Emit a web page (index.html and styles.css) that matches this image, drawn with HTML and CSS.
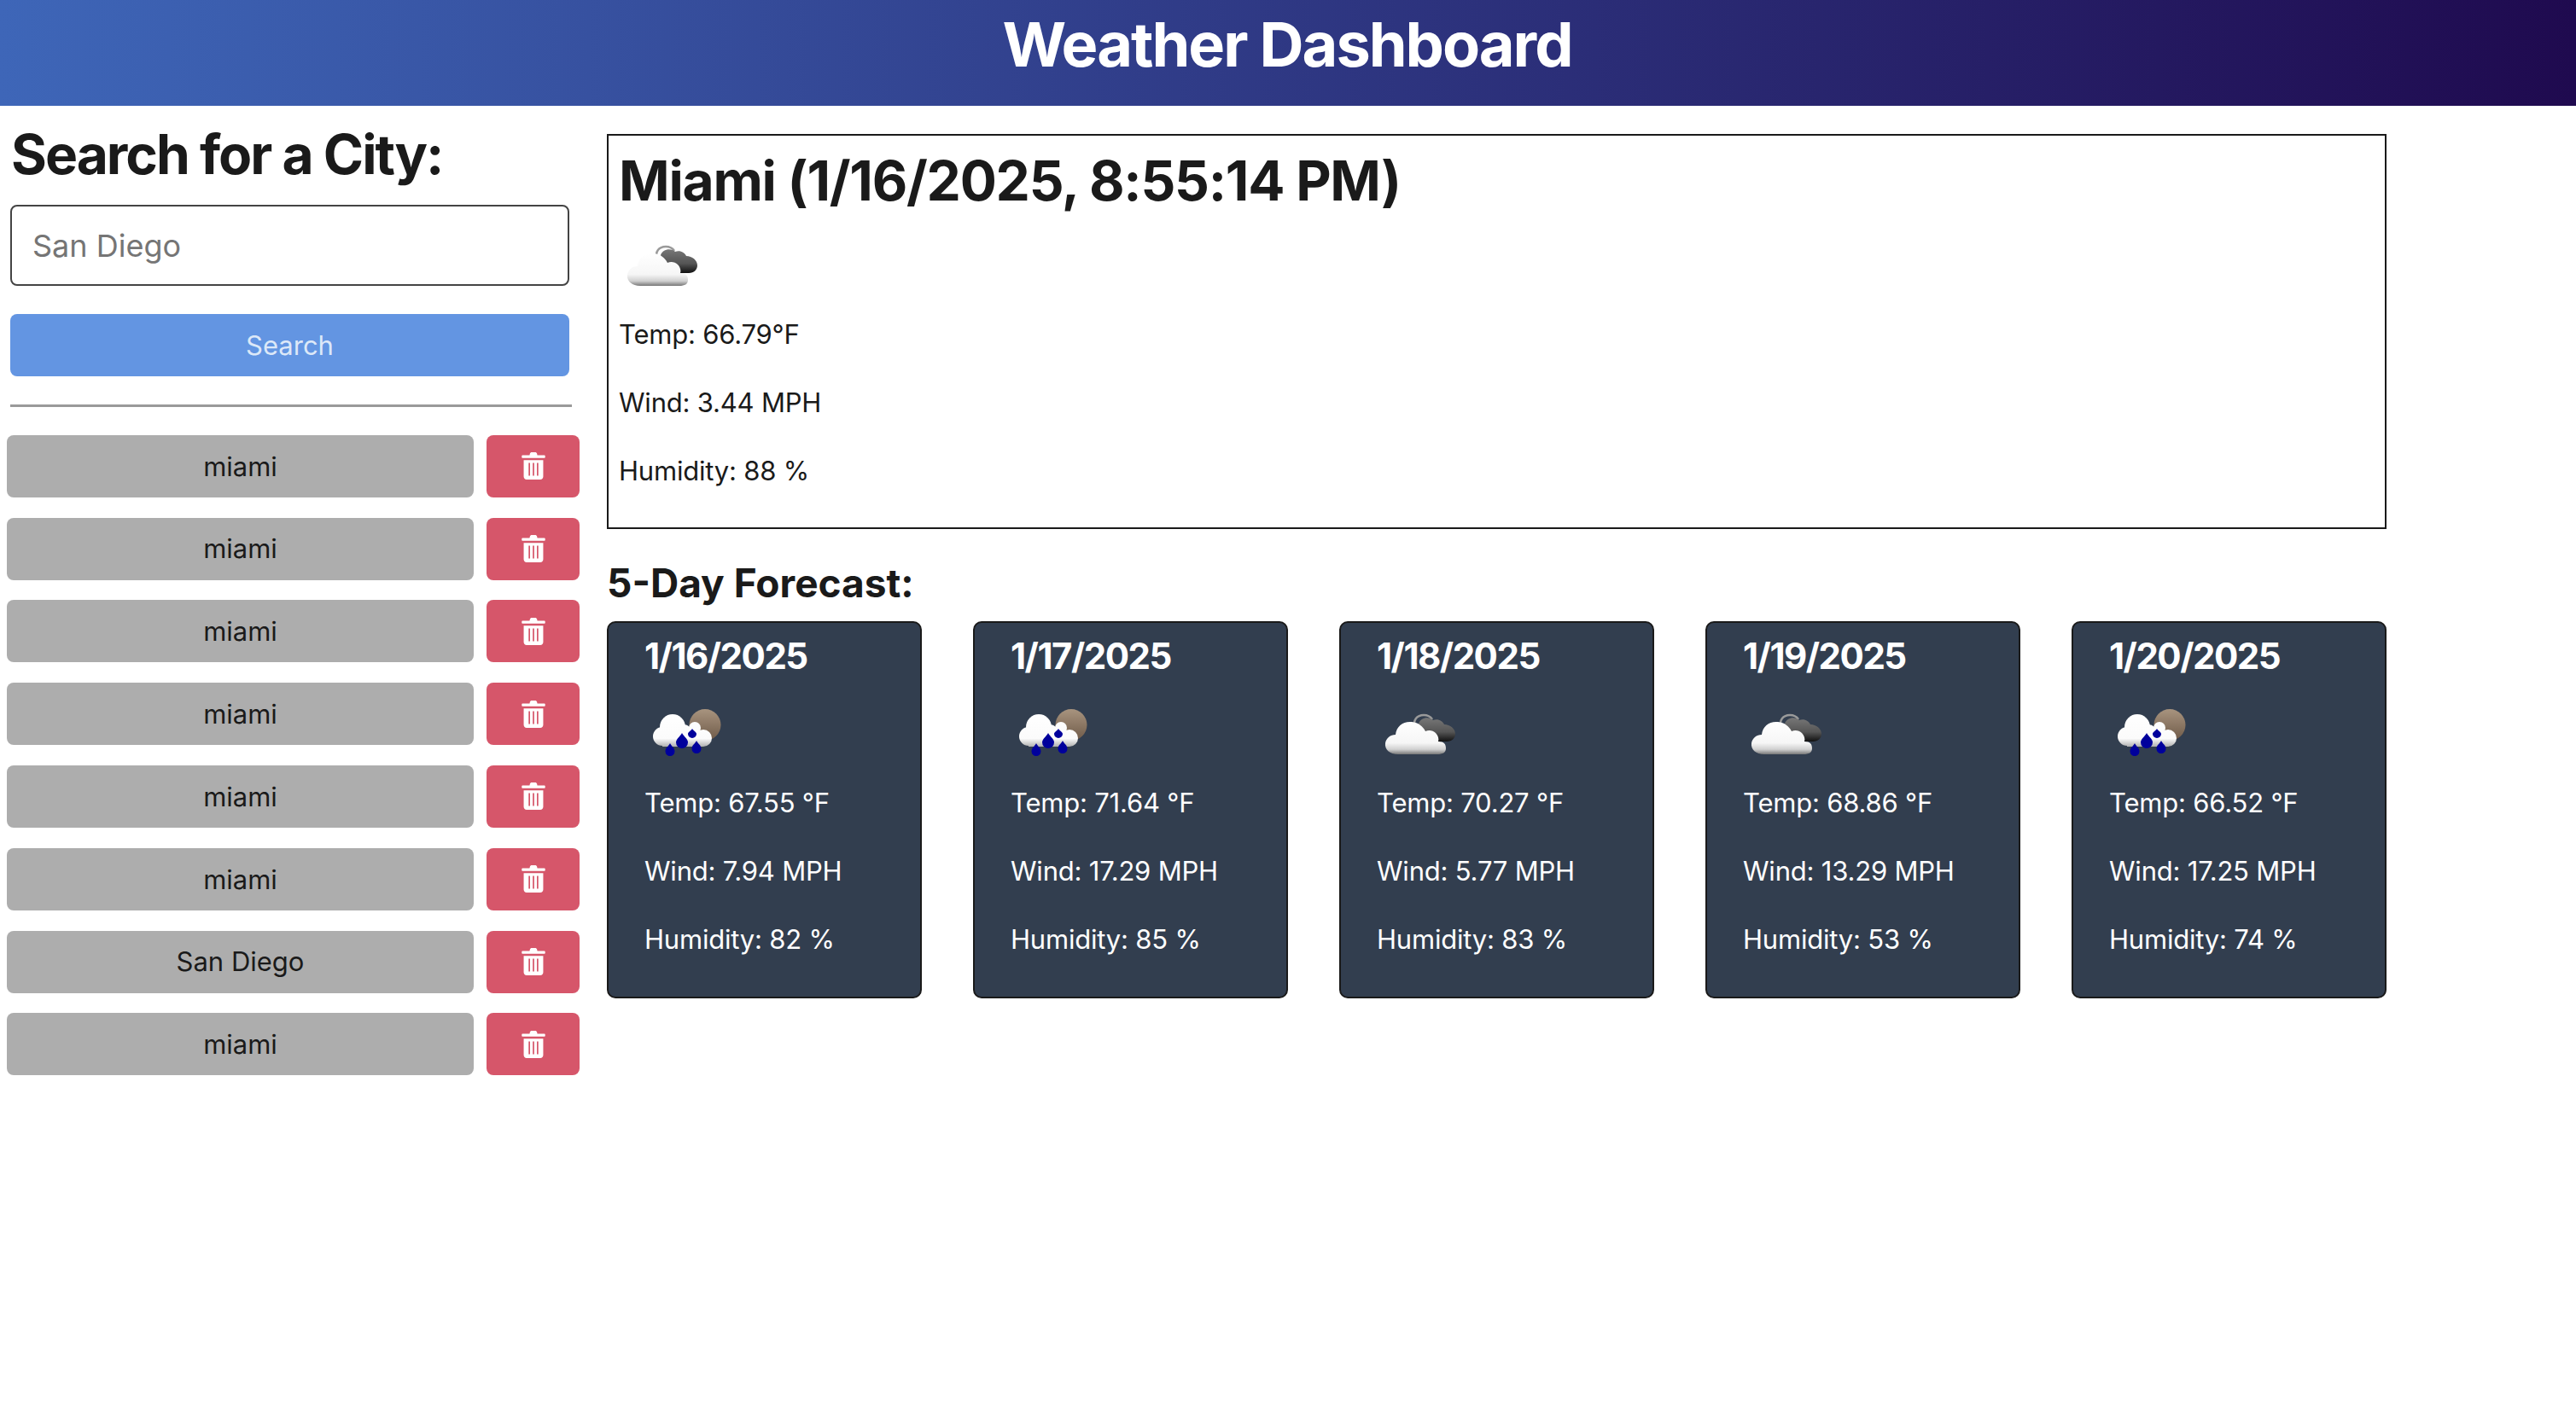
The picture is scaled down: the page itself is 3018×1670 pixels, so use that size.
FILE: index.html
```html
<!DOCTYPE html>
<html lang="en">
<head>
  <meta charset="UTF-8" />
  <title>Weather Dashboard</title>
  <link rel="stylesheet" href="styles.css">
</head>
<body>
  <svg class="defs" width="0" height="0">
    <defs>
      <linearGradient id="cloudWhite" x1="0" y1="0" x2="0" y2="1">
        <stop offset="0" stop-color="#ffffff" />
        <stop offset="0.65" stop-color="#f6f6f6" />
        <stop offset="0.85" stop-color="#d0d0d0" />
        <stop offset="1" stop-color="#777777" />
      </linearGradient>
      <linearGradient id="cloudDark" x1="0" y1="0" x2="0" y2="1">
        <stop offset="0" stop-color="#777777" />
        <stop offset="0.6" stop-color="#555555" />
        <stop offset="1" stop-color="#111111" />
      </linearGradient>
      <linearGradient id="cloudRain" gradientUnits="userSpaceOnUse" x1="0" y1="20" x2="0" y2="58">
        <stop offset="0" stop-color="#ffffff" />
        <stop offset="0.75" stop-color="#fbfbfb" />
        <stop offset="1" stop-color="#b0b0b0" />
      </linearGradient>
      <linearGradient id="moon" x1="0" y1="0" x2="0" y2="1">
        <stop offset="0" stop-color="#a8947f" />
        <stop offset="1" stop-color="#6f5a48" />
      </linearGradient>

      <!-- overcast icon -->
      <symbol id="iconClouds" viewBox="0 0 100 100">
        <g transform="translate(7 -1)">
          <path d="M38 36c-3-8 2-14 10-14 5 0 8 2 10 5" fill="none" stroke="#9a9a9a" stroke-width="2.500" />
          <path d="M42 32c2-7 12-9 17-4 6-2 11 1 13 5 7 0 13 5 13 11 0 5-4 9-10 9H60c-8 0-18-12-18-21z" fill="url(#cloudDark)" />
          <path d="M18 68C8 68 2 62 3 55c1-6 6-10 12-10 1-10 9-16 19-15 8 1 13 5 16 11 4-2 9-1 12 2 3 3 4 7 3 10 7 0 9 3 9 8s-4 7-10 7z" fill="url(#cloudWhite)" />
        </g>
      </symbol>

      <!-- rain icon -->
      <symbol id="iconRain" viewBox="0 0 100 100">
        <circle cx="71" cy="32.500" r="18.500" fill="url(#moon)" />
        <g fill="url(#cloudRain)">
          <circle cx="33" cy="35" r="15" />
          <circle cx="21" cy="46" r="11" />
          <circle cx="46" cy="42" r="10" />
          <circle cx="59" cy="36" r="7" />
          <circle cx="69" cy="48" r="10" />
          <rect x="21" y="40" width="48" height="18" />
        </g>
        <g fill="#00009c">
          <path d="M56 37c1 2 5 4 5 6a5 5 0 0 1-10 0c0-2 4-4 5-6z" />
          <path d="M44 42c2 4 7 7 7 11a7 7 0 0 1-14 0c0-4 5-7 7-11z" />
          <path d="M30 54c1 3 5.500 5 5.500 9.500a5.500 5.500 0 0 1-11 0c0-4.500 4.500-6.500 5.500-9.500z" />
          <path d="M61 51c1 3 5.500 5 5.500 9.500a5.500 5.500 0 0 1-11 0c0-4.500 4.500-6.500 5.500-9.500z" />
        </g>
      </symbol>

      <symbol id="iconTrash" viewBox="0 0 24 28">
        <path d="M8.500 1.200C8.800.5 9.400 0 10.200 0h3.600c.8 0 1.400.5 1.700 1.200L16 3h7c.6 0 1 .4 1 1v1c0 .6-.4 1-1 1H1C.4 6 0 5.600 0 5V4c0-.6.4-1 1-1h7z" fill="#fff" />
        <path fill-rule="evenodd" d="M2 8h20v17c0 1.700-1.300 3-3 3H5c-1.700 0-3-1.300-3-3zM7 11v13h1.500V11zM11.250 11v13h1.500V11zM15.500 11v13H17V11z" fill="#fff" />
      </symbol>
    </defs>
  </svg>

  <header class="page-header">
    <h1>Weather Dashboard</h1>
  </header>

  <div class="layout">
    <aside class="sidebar">
      <h2>Search for a City:</h2>
      <input class="city-input" type="text" placeholder="San Diego" />
      <button class="search-btn">Search</button>
      <hr class="divider" />

      <ul class="history">
        <li class="history-row">
          <button class="city-btn">miami</button>
          <button class="delete-btn"><svg class="trash"><use href="#iconTrash" /></svg></button>
        </li>
        <li class="history-row">
          <button class="city-btn">miami</button>
          <button class="delete-btn"><svg class="trash"><use href="#iconTrash" /></svg></button>
        </li>
        <li class="history-row">
          <button class="city-btn">miami</button>
          <button class="delete-btn"><svg class="trash"><use href="#iconTrash" /></svg></button>
        </li>
        <li class="history-row">
          <button class="city-btn">miami</button>
          <button class="delete-btn"><svg class="trash"><use href="#iconTrash" /></svg></button>
        </li>
        <li class="history-row">
          <button class="city-btn">miami</button>
          <button class="delete-btn"><svg class="trash"><use href="#iconTrash" /></svg></button>
        </li>
        <li class="history-row">
          <button class="city-btn">miami</button>
          <button class="delete-btn"><svg class="trash"><use href="#iconTrash" /></svg></button>
        </li>
        <li class="history-row">
          <button class="city-btn">San Diego</button>
          <button class="delete-btn"><svg class="trash"><use href="#iconTrash" /></svg></button>
        </li>
        <li class="history-row">
          <button class="city-btn">miami</button>
          <button class="delete-btn"><svg class="trash"><use href="#iconTrash" /></svg></button>
        </li>
      </ul>
    </aside>

    <main class="content">
      <section class="current">
        <h2>Miami (1/16/2025, 8:55:14 PM)</h2>
        <svg class="weather-icon"><use href="#iconClouds" /></svg>
        <p>Temp: 66.79°F</p>
        <p>Wind: 3.44 MPH</p>
        <p>Humidity: 88 %</p>
      </section>

      <h3 class="forecast-title">5-Day Forecast:</h3>

      <section class="forecast">
        <article class="card">
          <h4>1/16/2025</h4>
          <svg class="weather-icon"><use href="#iconRain" /></svg>
          <p>Temp: 67.55 °F</p>
          <p>Wind: 7.94 MPH</p>
          <p>Humidity: 82 %</p>
        </article>
        <article class="card">
          <h4>1/17/2025</h4>
          <svg class="weather-icon"><use href="#iconRain" /></svg>
          <p>Temp: 71.64 °F</p>
          <p>Wind: 17.29 MPH</p>
          <p>Humidity: 85 %</p>
        </article>
        <article class="card">
          <h4>1/18/2025</h4>
          <svg class="weather-icon"><use href="#iconClouds" /></svg>
          <p>Temp: 70.27 °F</p>
          <p>Wind: 5.77 MPH</p>
          <p>Humidity: 83 %</p>
        </article>
        <article class="card">
          <h4>1/19/2025</h4>
          <svg class="weather-icon"><use href="#iconClouds" /></svg>
          <p>Temp: 68.86 °F</p>
          <p>Wind: 13.29 MPH</p>
          <p>Humidity: 53 %</p>
        </article>
        <article class="card">
          <h4>1/20/2025</h4>
          <svg class="weather-icon"><use href="#iconRain" /></svg>
          <p>Temp: 66.52 °F</p>
          <p>Wind: 17.25 MPH</p>
          <p>Humidity: 74 %</p>
        </article>
      </section>
    </main>
  </div>
</body>
</html>
```

FILE: styles.css
```css
* {
  box-sizing: border-box;
}
body {
  margin: 0;
  font-family: "Inter", "Liberation Sans", sans-serif;
  font-size: 31px;
  line-height: 1.5;
  color: #1a1a1a;
  background: #fff;
}
.defs {
  position: absolute;
}
.page-header {
  height: 124px;
  padding: 0 2px 20px 0;
  display: flex;
  align-items: center;
  justify-content: center;
  background: linear-gradient(to right, #3e66b8, #1f0a4f);
}
.page-header h1 {
  margin: 0;
  color: #fff;
  font-size: 72px;
  font-weight: 700;
  letter-spacing: -2px;
  line-height: 1.2;
}
.layout {
  display: flex;
  align-items: flex-start;
}

/* left column */
.sidebar {
  width: 711px;
  flex-shrink: 0;
  padding: 19px 32px 0 8px;
}
.sidebar h2 {
  margin: 0 0 20px 5px;
  font-size: 64px;
  font-weight: 700;
  letter-spacing: -2px;
  line-height: 1.2;
}
.city-input {
  display: block;
  width: 655px;
  height: 95px;
  margin-left: 4px;
  padding: 2px 24px 0;
  border: 2px solid #444;
  border-radius: 8px;
  font: inherit;
  font-size: 36px;
}
.city-input::placeholder {
  color: #757575;
}
.search-btn {
  display: block;
  width: 655px;
  height: 73px;
  margin: 33px 0 0 4px;
  padding-top: 3px;
  border: none;
  border-radius: 8px;
  background: #6395e2;
  color: #dce8f8;
  font: inherit;
}
.divider {
  width: 658px;
  margin: 33px 0 33px 4px;
  border: none;
  border-top: 3px solid #9a9a9a;
}
.history {
  list-style: none;
  margin: 0;
  padding: 0;
}
.history-row {
  display: flex;
  gap: 15px;
  margin-bottom: 23.800px;
}
.city-btn {
  width: 547px;
  height: 73px;
  padding-top: 2px;
  border: none;
  border-radius: 8px;
  background: #adadad;
  color: #1a1a1a;
  font: inherit;
}
.delete-btn {
  width: 109px;
  height: 73px;
  display: flex;
  align-items: center;
  justify-content: center;
  padding: 0;
  border: none;
  border-radius: 8px;
  background: #d6566a;
}
.trash {
  width: 28px;
  height: 32px;
}

/* right column */
.content {
  width: 2085px;
  padding-top: 33px;
}
.current {
  height: 463px;
  padding: 15px 12px 0;
  border: 2px solid #1a1a1a;
}
.current h2 {
  margin: 0 0 17px;
  font-size: 64px;
  font-weight: 700;
  letter-spacing: -1.250px;
  line-height: 1.2;
}
.weather-icon {
  display: block;
  width: 100px;
  height: 100px;
  filter: blur(0.5px);
}
.current p,
.card p {
  margin: 0 0 33px;
  line-height: 47px;
  letter-spacing: -0.2px;
}
.forecast-title {
  margin: 36px 0 17px;
  font-size: 46px;
  font-weight: 700;
  line-height: 1.2;
}
.forecast {
  display: flex;
  justify-content: space-between;
}
.card {
  width: 369px;
  height: 442px;
  padding: 14px 42px 0;
  border: 2px solid #1a1a1a;
  border-radius: 10px;
  background: #323e4f;
  color: #fff;
}
.card h4 {
  margin: 0 0 22px;
  font-size: 42px;
  font-weight: 700;
  letter-spacing: -1.500px;
  line-height: 1.2;
}
```
